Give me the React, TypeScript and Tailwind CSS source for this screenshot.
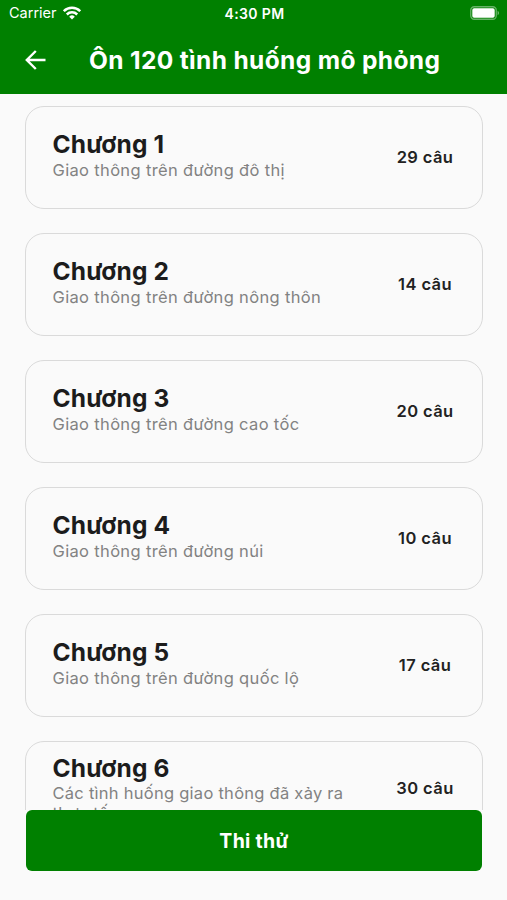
import clsx from "clsx";

interface Chapter {
  name: string;
  description: string;
  total: number;
}

const chapters: Chapter[] = [
  { name: "Chương 1", description: "Giao thông trên đường đô thị", total: 29 },
  { name: "Chương 2", description: "Giao thông trên đường nông thôn", total: 14 },
  { name: "Chương 3", description: "Giao thông trên đường cao tốc", total: 20 },
  { name: "Chương 4", description: "Giao thông trên đường núi", total: 10 },
  { name: "Chương 5", description: "Giao thông trên đường quốc lộ", total: 17 },
  {
    name: "Chương 6",
    description: "Các tình huống giao thông đã xảy ra thực tế",
    total: 30,
  },
];

const StatusBar = () => (
  <div className="grid h-7 grid-cols-3 items-center pl-[9px] pr-[7px] text-[14px]">
    <div className="flex items-center gap-[6px]">
      <span className="-mt-[2px] text-[14.5px]">Carrier</span>
      <svg className="-mt-[2px]" width="18" height="14" viewBox="0 0 18 14" fill="none" stroke="currentColor" strokeWidth="2.5">
        <path d="M.8 5.2a11.6 11.6 0 0 1 16.4 0" />
        <path d="M3.8 8.5a7.4 7.4 0 0 1 10.4 0" />
        <path d="M6.2 10.7a4 4 0 0 1 5.6 0L9 13.5z" fill="currentColor" stroke="none" />
      </svg>
    </div>
    <span className="-mt-[2px] text-center font-semibold tracking-[0.35px]">4:30 PM</span>
    <svg className="-mt-[2px] justify-self-end" width="30" height="14" viewBox="0 0 30 14" fill="none">
      <rect x="0.75" y="0.75" width="25.5" height="12.5" rx="3.5" stroke="#fff" strokeOpacity="0.4" strokeWidth="1.3" />
      <rect x="2.3" y="2.3" width="22.4" height="9.4" rx="1.8" fill="#fff" />
      <path d="M27.6 4.8c1.9.8 1.9 3.6 0 4.4z" fill="#fff" fillOpacity="0.45" />
    </svg>
  </div>
);

const ChapterCard = ({ chapter, compact }: { chapter: Chapter; compact: boolean }) => (
  <div
    className={clsx(
      "flex h-[103px] shrink-0 justify-between rounded-[19px] border border-[#dadada] pl-[26.5px] pr-[26px]",
      compact ? "pt-[10px]" : "pt-[21px]"
    )}
  >
    <div className="w-[312px]">
      <h2 className="text-[24.5px] font-bold leading-[32px] tracking-[0.2px] text-[#1c1c1c]">
        {chapter.name}
      </h2>
      <p
        className={clsx(
          "text-[16.5px] text-[#828282]",
          compact ? "leading-[19.5px] tracking-[0.26px]" : "leading-[21px] tracking-[0.34px]"
        )}
      >
        {chapter.description}
      </p>
    </div>
    <span
      className={clsx(
        "w-[62px] text-center text-[16.5px] font-semibold leading-6 tracking-[0.4px] text-[#222]",
        compact ? "pt-[24px]" : "pt-[17px]"
      )}
    >
      {chapter.total} câu
    </span>
  </div>
);

const App = () => {
  return (
    <div className="flex h-[900px] w-[507px] flex-col overflow-hidden bg-[#fafafa] font-['Inter',sans-serif]">
      <header className="h-[94px] shrink-0 bg-[#008000] text-white">
        <StatusBar />
        <div className="flex h-16 items-center pl-[25px]">
          <svg width="22" height="20" viewBox="0 0 22 20" fill="none" stroke="currentColor" strokeWidth="2.4">
            <path d="M20.5 10H2.5M10.8 1L1.8 10l9 9" />
          </svg>
          <h1 className="ml-[42px] whitespace-nowrap text-[24.5px] font-bold tracking-[0.36px]">
            Ôn 120 tình huống mô phỏng
          </h1>
        </div>
      </header>
      <main className="flex h-[716px] shrink-0 flex-col gap-[24px] overflow-hidden pl-[25px] pr-[24px] pt-[12px]">
        {chapters.map((chapter, index) => (
          <ChapterCard key={chapter.name} chapter={chapter} compact={index === 5} />
        ))}
      </main>
      <footer className="pl-[26px] pr-[25px]">
        <button className="h-[61px] w-full rounded-md bg-[#008000] pt-[2px] text-[19.5px] font-bold tracking-[0.3px] text-white">
          Thi thử
        </button>
      </footer>
    </div>
  );
};

export default App;
